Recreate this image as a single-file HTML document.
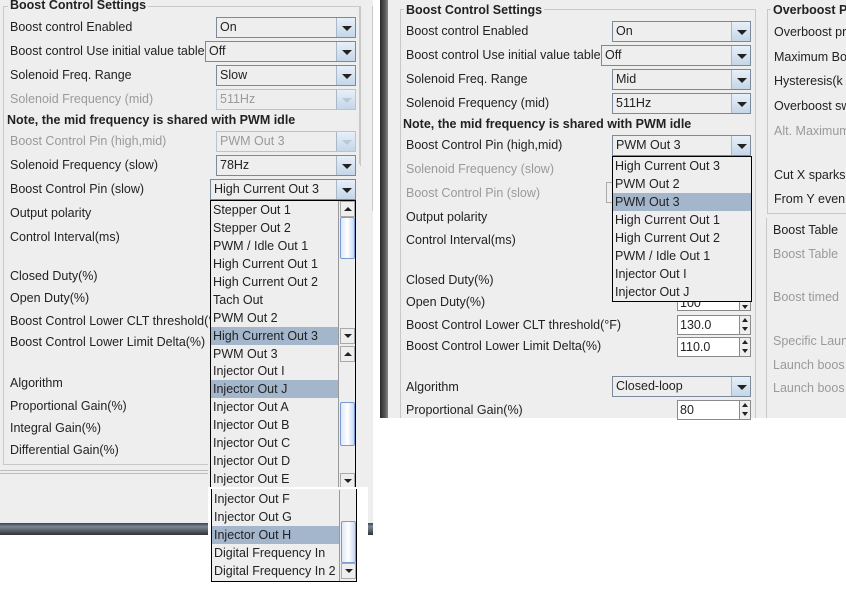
<!DOCTYPE html><html><head><style>
*{margin:0;padding:0;box-sizing:border-box}
body{width:846px;height:593px;background:#fff;position:relative;overflow:hidden;font-family:"Liberation Sans",sans-serif;font-size:12.5px;color:#222}
.a{position:absolute;white-space:nowrap}
.l{position:absolute;white-space:nowrap;line-height:16px}
.d{color:#9a9a9a}
.b{font-weight:bold}
.cb{position:absolute;height:21px;border:1px solid #7a8a9a;background:#eee;line-height:19px;padding-left:3px;white-space:nowrap}
.cb .ar{position:absolute;right:0;top:0;width:19px;height:19px;border-left:1px solid #a8b8c8;background:linear-gradient(#e8f0f8,#c4d6e8)}
.cb .ar:after{content:"";position:absolute;left:5px;top:8px;border-left:5px solid transparent;border-right:5px solid transparent;border-top:5px solid #222}
.cb.dis{color:#9a9a9a;border-color:#b8c4d0}
.cb.dis .ar:after{border-top-color:#b8c8d8}
.li{position:absolute;height:18px;line-height:18px;padding-left:2px;white-space:nowrap;width:128px}
.hl{background:#a4b6cc}
.sp{position:absolute;height:20px;border:1px solid #8a8a8a;border-right:none;background:#fff;line-height:18px;padding-left:2px}
.spb{position:absolute;width:12px;height:20px;border:1px solid #8a8a8a;background:#eee}
.spb:before{content:"";position:absolute;left:2px;top:2px;border-left:3px solid transparent;border-right:3px solid transparent;border-bottom:4px solid #222}
.spb:after{content:"";position:absolute;left:2px;top:11px;border-left:3px solid transparent;border-right:3px solid transparent;border-top:4px solid #222}
.sbar{position:absolute;background:#eee;border-left:1px solid #999}
.thumb{position:absolute;left:1px;width:15px;border:1px solid #7a9ad0;border-radius:2px;background:linear-gradient(90deg,#dde8f8,#fff,#c8d8f0)}
.btn{position:absolute;left:1px;width:15px;height:16px;border:1px solid #aaa;background:#eee}
.up:after{content:"";position:absolute;left:3px;top:5px;border-left:4px solid transparent;border-right:4px solid transparent;border-bottom:4px solid #222}
.dn:after{content:"";position:absolute;left:3px;top:5px;border-left:4px solid transparent;border-right:4px solid transparent;border-top:4px solid #222}
</style></head><body>

<!-- LEFT PANEL -->
<div class="a" style="left:0;top:0;width:373px;height:523px;background:#eee"></div>
<div class="a" style="left:0;top:523px;width:373px;height:12px;background:linear-gradient(#3a4450,#7c8794 30%,#333 100%)"></div>
<div class="a" style="left:3px;top:6px;width:357px;height:158px;border:1px solid #c8c8c8;border-bottom:none"></div>
<div class="a" style="left:3px;top:6px;width:1px;height:458px;background:#c8c8c8"></div>
<div class="a" style="left:3px;top:464px;width:205px;height:1px;background:#c8c8c8"></div>
<div class="a" style="left:0;top:470px;width:208px;height:1px;background:#bbb"></div>
<div class="a" style="left:0;top:473px;width:208px;height:1px;background:#bbb"></div>
<div class="a" style="left:360px;top:6px;width:1px;height:160px;background:#c8c8c8"></div>
<div class="a" style="left:372px;top:6px;width:1px;height:205px;background:#c8c8c8"></div>
<div class="l b" style="left:8px;top:-3px;background:#eee;padding:0 2px">Boost Control Settings</div>

<div class="l" style="left:10px;top:19px">Boost control Enabled</div>
<div class="cb" style="left:216px;top:17px;width:140px">On<div class="ar"></div></div>
<div class="l" style="left:10px;top:43px">Boost control Use initial value table</div>
<div class="cb" style="left:205px;top:41px;width:151px">Off<div class="ar"></div></div>
<div class="l" style="left:10px;top:67px">Solenoid Freq. Range</div>
<div class="cb" style="left:216px;top:65px;width:140px">Slow<div class="ar"></div></div>
<div class="l d" style="left:10px;top:91px">Solenoid Frequency (mid)</div>
<div class="cb dis" style="left:216px;top:89px;width:140px">511Hz<div class="ar"></div></div>
<div class="l b" style="left:7px;top:112px">Note, the mid frequency is shared with PWM idle</div>
<div class="l d" style="left:10px;top:133px">Boost Control Pin (high,mid)</div>
<div class="cb dis" style="left:216px;top:131px;width:140px">PWM Out 3<div class="ar"></div></div>
<div class="l" style="left:10px;top:157px">Solenoid Frequency (slow)</div>
<div class="cb" style="left:216px;top:155px;width:140px">78Hz<div class="ar"></div></div>
<div class="l" style="left:10px;top:181px">Boost Control Pin (slow)</div>
<div class="cb" style="left:210px;top:179px;width:146px">High Current Out 3<div class="ar"></div></div>
<div class="l" style="left:10px;top:205px">Output polarity</div>
<div class="l" style="left:10px;top:229px">Control Interval(ms)</div>
<div class="l" style="left:10px;top:268px">Closed Duty(%)</div>
<div class="l" style="left:10px;top:290px">Open Duty(%)</div>
<div class="l" style="left:10px;top:313px">Boost Control Lower CLT threshold(°F)</div>
<div class="l" style="left:10px;top:334px">Boost Control Lower Limit Delta(%)</div>
<div class="l" style="left:10px;top:375px">Algorithm</div>
<div class="l" style="left:10px;top:398px">Proportional Gain(%)</div>
<div class="l" style="left:10px;top:420px">Integral Gain(%)</div>
<div class="l" style="left:10px;top:442px">Differential Gain(%)</div>

<!-- left dropdown list -->
<div class="a" style="left:210px;top:200px;width:146px;height:290px;background:#eee;border:1px solid #000;border-bottom:none"></div>
<div class="li" style="left:211px;top:201px">Stepper Out 1</div>
<div class="li" style="left:211px;top:219px">Stepper Out 2</div>
<div class="li" style="left:211px;top:237px">PWM / Idle Out 1</div>
<div class="li" style="left:211px;top:255px">High Current Out 1</div>
<div class="li" style="left:211px;top:273px">High Current Out 2</div>
<div class="li" style="left:211px;top:291px">Tach Out</div>
<div class="li" style="left:211px;top:309px">PWM Out 2</div>
<div class="li hl" style="left:211px;top:327px">High Current Out 3</div>
<div class="li" style="left:211px;top:345px">PWM Out 3</div>
<div class="li" style="left:211px;top:362px">Injector Out I</div>
<div class="li hl" style="left:211px;top:380px">Injector Out J</div>
<div class="li" style="left:211px;top:398px">Injector Out A</div>
<div class="li" style="left:211px;top:416px">Injector Out B</div>
<div class="li" style="left:211px;top:434px">Injector Out C</div>
<div class="li" style="left:211px;top:452px">Injector Out D</div>
<div class="li" style="left:211px;top:470px">Injector Out E</div>
<div class="sbar" style="left:338px;top:201px;width:17px;height:289px">
 <div class="btn up" style="top:0"></div>
 <div class="thumb" style="top:16px;height:42px"></div>
 <div class="btn dn" style="top:127px"></div>
 <div class="btn up" style="top:145px"></div>
 <div class="thumb" style="top:201px;height:44px"></div>
 <div class="btn dn" style="top:272px"></div>
</div>
<div class="a" style="left:208px;top:487px;width:160px;height:97px;background:#fff"></div>
<div class="a" style="left:211px;top:489px;width:146px;height:93px;background:#eee;border-right:1px solid #000;border-bottom:1px solid #000;border-left:1px solid #000"></div>
<div class="li" style="left:212px;top:490px">Injector Out F</div>
<div class="li" style="left:212px;top:508px">Injector Out G</div>
<div class="li hl" style="left:212px;top:526px">Injector Out H</div>
<div class="li" style="left:212px;top:544px">Digital Frequency In</div>
<div class="li" style="left:212px;top:562px">Digital Frequency In 2</div>
<div class="sbar" style="left:339px;top:490px;width:17px;height:91px">
 <div class="thumb" style="top:31px;height:42px"></div>
 <div class="btn dn" style="top:73px"></div>
</div>

<!-- RIGHT PANEL -->
<div class="a" style="left:380px;top:0;width:466px;height:418px;background:#eee"></div>
<div class="a" style="left:380px;top:0;width:8px;height:418px;background:linear-gradient(90deg,#2a2a2a,#555 60%,#888)"></div>
<div class="a" style="left:400px;top:9px;width:356px;height:409px;border:1px solid #c8c8c8;border-bottom:none"></div>
<div class="l b" style="left:404px;top:2px;background:#eee;padding:0 2px">Boost Control Settings</div>
<div class="a" style="left:767px;top:9px;width:90px;height:205px;border:1px solid #c8c8c8;border-right:none"></div>
<div class="a" style="left:766px;top:218px;width:1px;height:200px;background:#c8c8c8"></div>
<div class="l b" style="left:771px;top:2px;background:#eee;padding:0 2px">Overboost P</div>

<div class="l" style="left:406px;top:23px">Boost control Enabled</div>
<div class="cb" style="left:612px;top:21px;width:139px">On<div class="ar"></div></div>
<div class="l" style="left:406px;top:47px">Boost control Use initial value table</div>
<div class="cb" style="left:601px;top:45px;width:150px">Off<div class="ar"></div></div>
<div class="l" style="left:406px;top:71px">Solenoid Freq. Range</div>
<div class="cb" style="left:612px;top:69px;width:139px">Mid<div class="ar"></div></div>
<div class="l" style="left:406px;top:95px">Solenoid Frequency (mid)</div>
<div class="cb" style="left:612px;top:93px;width:139px">511Hz<div class="ar"></div></div>
<div class="l b" style="left:403px;top:116px">Note, the mid frequency is shared with PWM idle</div>
<div class="l" style="left:406px;top:137px">Boost Control Pin (high,mid)</div>
<div class="cb" style="left:612px;top:135px;width:139px">PWM Out 3<div class="ar"></div></div>
<div class="l d" style="left:406px;top:161px">Solenoid Frequency (slow)</div>
<div class="l d" style="left:406px;top:185px">Boost Control Pin (slow)</div>
<div class="a" style="left:606px;top:182px;width:8px;height:21px;border:1px solid #aaa;border-right:none"></div>
<div class="l" style="left:406px;top:209px">Output polarity</div>
<div class="l" style="left:406px;top:232px">Control Interval(ms)</div>
<div class="l" style="left:406px;top:272px">Closed Duty(%)</div>
<div class="l" style="left:406px;top:294px">Open Duty(%)</div>
<div class="sp" style="left:677px;top:293px;width:62px;height:18px">100</div><div class="spb" style="left:739px;top:293px;height:18px"></div>
<div class="l" style="left:406px;top:317px">Boost Control Lower CLT threshold(°F)</div>
<div class="sp" style="left:677px;top:315px;width:62px">130.0</div><div class="spb" style="left:739px;top:315px"></div>
<div class="l" style="left:406px;top:338px">Boost Control Lower Limit Delta(%)</div>
<div class="sp" style="left:677px;top:337px;width:62px">110.0</div><div class="spb" style="left:739px;top:337px"></div>
<div class="l" style="left:406px;top:379px">Algorithm</div>
<div class="cb" style="left:612px;top:376px;width:139px">Closed-loop<div class="ar"></div></div>
<div class="l" style="left:406px;top:402px">Proportional Gain(%)</div>
<div class="sp" style="left:677px;top:400px;width:62px">80</div><div class="spb" style="left:739px;top:400px"></div>

<!-- right popup -->
<div class="a" style="left:612px;top:156px;width:140px;height:146px;background:#eee;border:1px solid #000"></div>
<div class="li" style="left:613px;top:157px;width:138px">High Current Out 3</div>
<div class="li" style="left:613px;top:175px;width:138px">PWM Out 2</div>
<div class="li hl" style="left:613px;top:193px;width:138px">PWM Out 3</div>
<div class="li" style="left:613px;top:211px;width:138px">High Current Out 1</div>
<div class="li" style="left:613px;top:229px;width:138px">High Current Out 2</div>
<div class="li" style="left:613px;top:247px;width:138px">PWM / Idle Out 1</div>
<div class="li" style="left:613px;top:265px;width:138px">Injector Out I</div>
<div class="li" style="left:613px;top:283px;width:138px">Injector Out J</div>

<!-- right column -->
<div class="l" style="left:774px;top:24px">Overboost pr</div>
<div class="l" style="left:774px;top:49px">Maximum Bo</div>
<div class="l" style="left:774px;top:73px">Hysteresis(k</div>
<div class="l" style="left:774px;top:98px">Overboost sw</div>
<div class="l d" style="left:774px;top:123px">Alt. Maximum</div>
<div class="l" style="left:774px;top:167px">Cut X sparks</div>
<div class="l" style="left:774px;top:191px">From Y even</div>
<div class="l" style="left:773px;top:222px">Boost Table</div>
<div class="l d" style="left:773px;top:246px">Boost Table</div>
<div class="l d" style="left:773px;top:289px">Boost timed</div>
<div class="l d" style="left:773px;top:333px">Specific Laun</div>
<div class="l d" style="left:773px;top:357px">Launch boos</div>
<div class="l d" style="left:773px;top:380px">Launch boos</div>
</body></html>
